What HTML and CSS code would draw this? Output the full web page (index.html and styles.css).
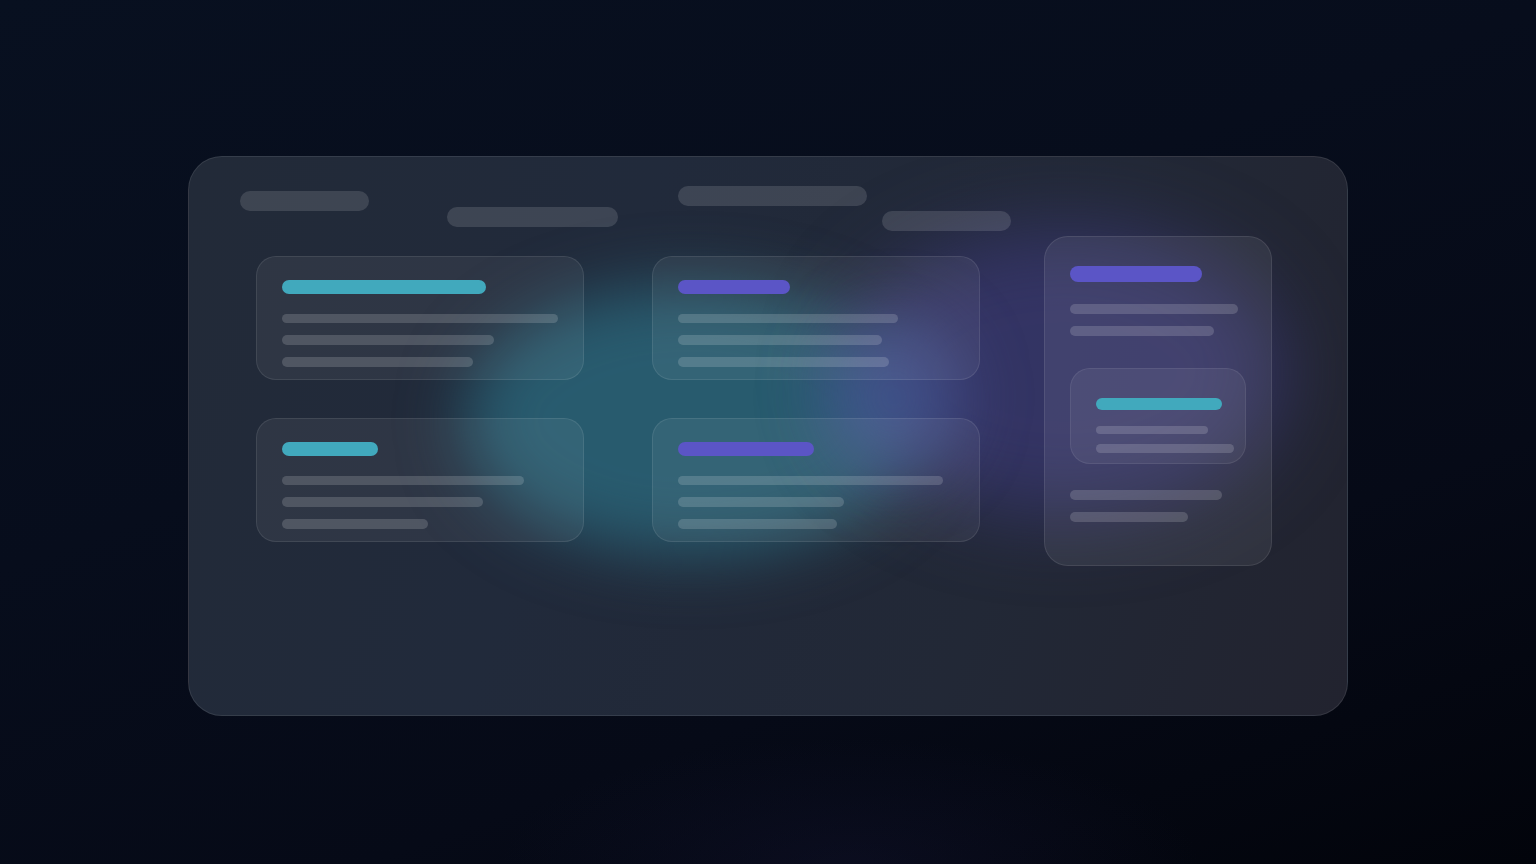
FILE: index.html
```html
<!DOCTYPE html>
<html>
<head>
<meta charset="utf-8">
<link rel="stylesheet" href="styles.css">
</head>
<body>
<div class="stage">
  <div class="panel">
    <div class="blob blob-teal"></div>
    <div class="blob blob-purple"></div>
    <div class="blob blob-blue"></div>
    <div class="header">
      <div class="hbar hb1"></div>
      <div class="hbar hb2"></div>
      <div class="hbar hb3"></div>
      <div class="hbar hb4"></div>
    </div>
    <div class="body">
      <div class="grid">
        <div class="card">
          <div class="title teal" style="width:204px"></div>
          <div class="line" style="width:276px"></div>
          <div class="line" style="width:212px"></div>
          <div class="line" style="width:191px"></div>
        </div>
        <div class="card">
          <div class="title purple" style="width:112px"></div>
          <div class="line" style="width:220px"></div>
          <div class="line" style="width:204px"></div>
          <div class="line" style="width:211px"></div>
        </div>
        <div class="card">
          <div class="title teal" style="width:96px"></div>
          <div class="line" style="width:242px"></div>
          <div class="line" style="width:201px"></div>
          <div class="line" style="width:146px"></div>
        </div>
        <div class="card">
          <div class="title purple" style="width:136px"></div>
          <div class="line" style="width:265px"></div>
          <div class="line" style="width:166px"></div>
          <div class="line" style="width:159px"></div>
        </div>
      </div>
      <div class="side">
        <div class="title purple big" style="width:132px"></div>
        <div class="line" style="width:168px"></div>
        <div class="line" style="width:144px"></div>
        <div class="inner">
          <div class="title teal" style="width:126px"></div>
          <div class="line" style="width:112px"></div>
          <div class="line" style="width:138px"></div>
        </div>
        <div class="line" style="width:152px"></div>
        <div class="line" style="width:118px"></div>
      </div>
    </div>
  </div>
</div>
</body>
</html>
```
FILE: styles.css
```css
* { box-sizing: border-box; }
html, body { margin: 0; padding: 0; }
body {
  width: 1536px;
  height: 864px;
  overflow: hidden;
  background:
    radial-gradient(ellipse 500px 180px at 850px 864px, rgba(25,25,60,0.3), rgba(0,0,0,0) 70%),
    linear-gradient(160deg, #081020 0%, #070d1c 40%, #060a17 70%, #02040b 100%);
  font-family: "Inter", "Liberation Sans", sans-serif;
}
.stage {
  padding: 156px 0 0 188px;
}
.panel {
  position: relative;
  width: 1160px;
  height: 560px;
  border-radius: 34px;
  border: 1px solid rgba(255,255,255,0.09);
  background: linear-gradient(110deg, #222a38 0%, #212a3b 35%, #222836 70%, #22232f 100%);
  overflow: hidden;
  display: flex;
  flex-direction: column;
}
.blob {
  position: absolute;
  border-radius: 50%;
  pointer-events: none;
}
.blob-teal {
  left: 275px;
  top: 128px;
  width: 455px;
  height: 270px;
  background: rgba(42,104,124,0.8);
  filter: blur(32px);
}
.blob-purple {
  left: 655px;
  top: 70px;
  width: 440px;
  height: 290px;
  background: rgba(62,58,125,0.65);
  filter: blur(40px);
}
.blob-blue {
  left: 635px;
  top: 160px;
  width: 140px;
  height: 160px;
  background: rgba(75,95,160,0.5);
  filter: blur(32px);
}
.header {
  position: relative;
  display: flex;
  align-items: flex-start;
  padding: 29px 0 0 51px;
  height: 74px;
}
.hbar {
  height: 20px;
  border-radius: 10px;
  background: rgba(255,255,255,0.13);
}
.hb1 { width: 129px; margin-top: 5px; }
.hb2 { width: 171px; margin-top: 21px; margin-left: 78px; }
.hb3 { width: 189px; margin-top: 0; margin-left: 60px; }
.hb4 { width: 129px; margin-top: 25px; margin-left: 15px; }
.body {
  position: relative;
  display: flex;
  align-items: flex-start;
  padding: 5px 0 0 67px;
}
.grid {
  margin-top: 20px;
  display: grid;
  grid-template-columns: 328px 328px;
  grid-auto-rows: 124px;
  column-gap: 68px;
  row-gap: 38px;
}
.card {
  border-radius: 20px;
  border: 1px solid rgba(255,255,255,0.09);
  background: rgba(255,255,255,0.06);
  padding: 23px 0 0 25px;
  display: flex;
  flex-direction: column;
}
.title {
  height: 14px;
  border-radius: 7px;
  margin-bottom: 20px;
}
.title.big { height: 16px; border-radius: 8px; margin-bottom: 22px; }
.teal { background: #41a9bd; }
.purple { background: #5b55c6; }
.line {
  height: 10px;
  border-radius: 5px;
  background: rgba(255,255,255,0.16);
  margin-bottom: 12px;
}
.side {
  margin-left: 64px;
  width: 228px;
  height: 330px;
  border-radius: 24px;
  border: 1px solid rgba(255,255,255,0.09);
  background: rgba(255,255,255,0.07);
  padding: 29px 0 0 25px;
  display: flex;
  flex-direction: column;
}
.inner {
  width: 176px;
  height: 96px;
  margin-top: 20px;
  margin-bottom: 26px;
  border-radius: 20px;
  border: 1px solid rgba(255,255,255,0.08);
  background: rgba(255,255,255,0.06);
  padding: 29px 0 0 25px;
  display: flex;
  flex-direction: column;
}
.inner .title { margin-bottom: 16px; }
.inner .line { margin-bottom: 10px; }
```
